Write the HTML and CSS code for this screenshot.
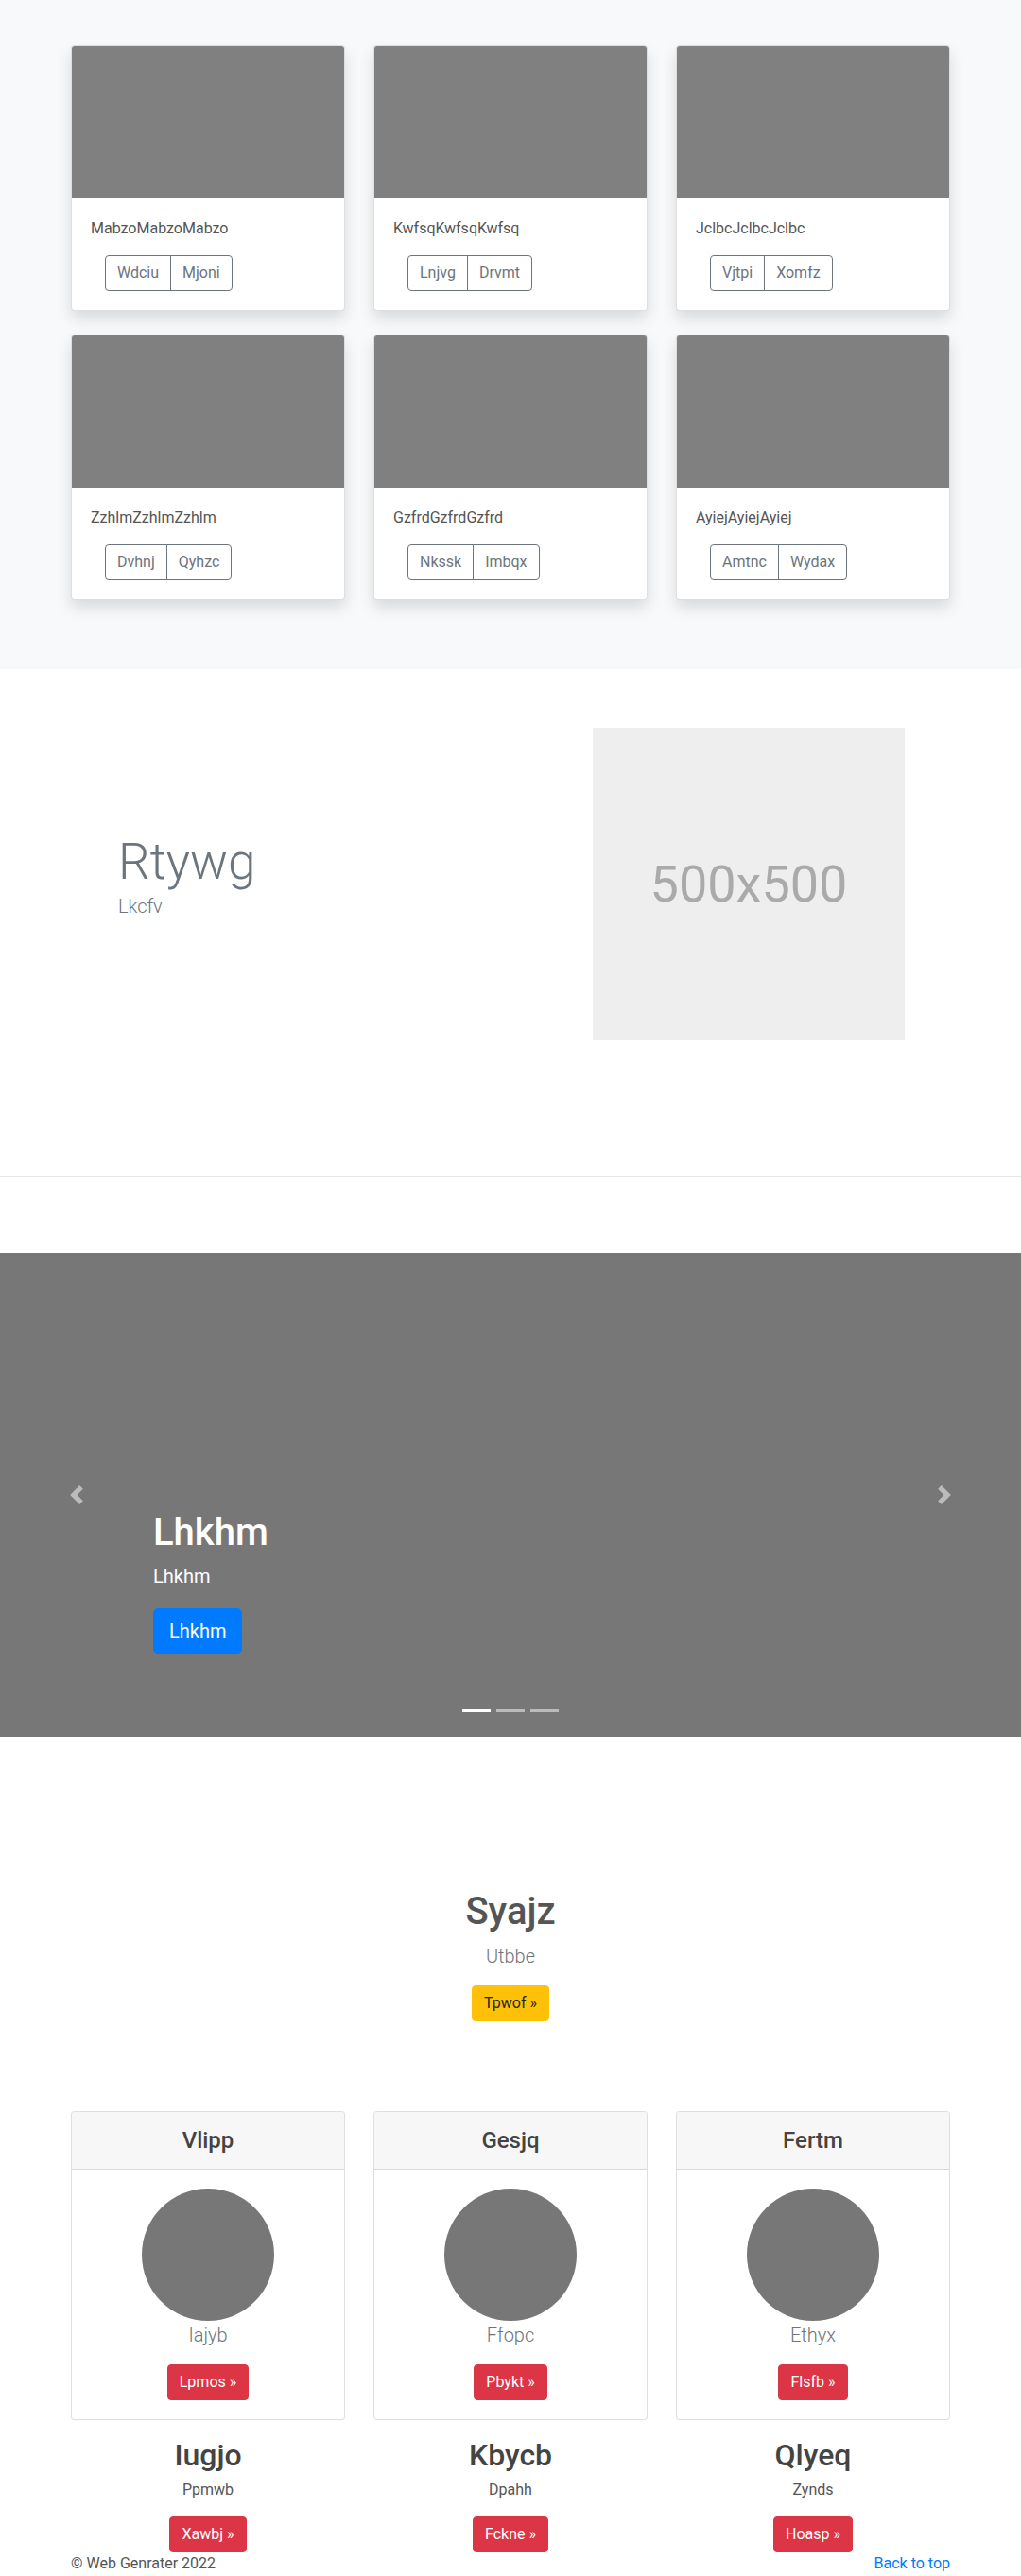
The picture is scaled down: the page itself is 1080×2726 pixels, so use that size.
FILE: index.html
```html
<!DOCTYPE html>
<html lang="en">
<head>
<meta charset="utf-8">
<title>Web Genrater</title>
<link rel="stylesheet" href="styles.css">
</head>
<body>
<section class="album">
  <div class="container grid3 album-grid">
    <div class="card shadow-card">
      <div class="thumb"></div>
      <div class="card-body">
        <p class="card-text">MabzoMabzoMabzo</p>
        <div class="btn-group"><button class="btn btn-outline">Wdciu</button><button class="btn btn-outline">Mjoni</button></div>
      </div>
    </div>
    <div class="card shadow-card">
      <div class="thumb"></div>
      <div class="card-body">
        <p class="card-text">KwfsqKwfsqKwfsq</p>
        <div class="btn-group"><button class="btn btn-outline">Lnjvg</button><button class="btn btn-outline">Drvmt</button></div>
      </div>
    </div>
    <div class="card shadow-card">
      <div class="thumb"></div>
      <div class="card-body">
        <p class="card-text">JclbcJclbcJclbc</p>
        <div class="btn-group"><button class="btn btn-outline">Vjtpi</button><button class="btn btn-outline">Xomfz</button></div>
      </div>
    </div>
    <div class="card shadow-card">
      <div class="thumb"></div>
      <div class="card-body">
        <p class="card-text">ZzhlmZzhlmZzhlm</p>
        <div class="btn-group"><button class="btn btn-outline">Dvhnj</button><button class="btn btn-outline">Qyhzc</button></div>
      </div>
    </div>
    <div class="card shadow-card">
      <div class="thumb"></div>
      <div class="card-body">
        <p class="card-text">GzfrdGzfrdGzfrd</p>
        <div class="btn-group"><button class="btn btn-outline">Nkssk</button><button class="btn btn-outline">Imbqx</button></div>
      </div>
    </div>
    <div class="card shadow-card">
      <div class="thumb"></div>
      <div class="card-body">
        <p class="card-text">AyiejAyiejAyiej</p>
        <div class="btn-group"><button class="btn btn-outline">Amtnc</button><button class="btn btn-outline">Wydax</button></div>
      </div>
    </div>
  </div>
</section>

<section class="container featurette">
  <div class="feat-text">
    <h2 class="feat-heading">Rtywg</h2>
    <p class="lead">Lkcfv</p>
  </div>
  <div class="feat-media">
    <div class="placeholder">500x500</div>
  </div>
</section>
<hr class="divider">

<section class="carousel">
  <a class="ctrl ctrl-prev" href="#">
    <svg class="ctrl-icon" viewBox="0 0 8 8" width="20" height="20"><path fill="#fff" d="M5.25 0l-4 4 4 4 1.5-1.5-2.5-2.5 2.5-2.5-1.5-1.5z"/></svg>
  </a>
  <a class="ctrl ctrl-next" href="#">
    <svg class="ctrl-icon" viewBox="0 0 8 8" width="20" height="20"><path fill="#fff" d="M2.75 0l-1.5 1.5 2.5 2.5-2.5 2.5 1.5 1.5 4-4-4-4z"/></svg>
  </a>
  <div class="caption">
    <h1 class="caption-title">Lhkhm</h1>
    <p class="caption-text">Lhkhm</p>
    <p class="caption-action"><a class="btn btn-lg btn-primary" href="#">Lhkhm</a></p>
  </div>
  <ol class="indicators">
    <li class="active"></li>
    <li></li>
    <li></li>
  </ol>
</section>

<section class="container intro">
  <h2 class="intro-title">Syajz</h2>
  <p class="lead">Utbbe</p>
  <a class="btn btn-warning" href="#">Tpwof &raquo;</a>
</section>

<section class="container grid3 team">
  <div class="team-col">
    <div class="card plain-card">
      <div class="card-header"><h4>Vlipp</h4></div>
      <div class="card-body center">
        <div class="circle"></div>
        <p class="lead small-lead">Iajyb</p>
        <a class="btn btn-danger" href="#">Lpmos &raquo;</a>
      </div>
    </div>
    <h2 class="team-title">Iugjo</h2>
    <p class="team-text">Ppmwb</p>
    <a class="btn btn-danger" href="#">Xawbj &raquo;</a>
  </div>
  <div class="team-col">
    <div class="card plain-card">
      <div class="card-header"><h4>Gesjq</h4></div>
      <div class="card-body center">
        <div class="circle"></div>
        <p class="lead small-lead">Ffopc</p>
        <a class="btn btn-danger" href="#">Pbykt &raquo;</a>
      </div>
    </div>
    <h2 class="team-title">Kbycb</h2>
    <p class="team-text">Dpahh</p>
    <a class="btn btn-danger" href="#">Fckne &raquo;</a>
  </div>
  <div class="team-col">
    <div class="card plain-card">
      <div class="card-header"><h4>Fertm</h4></div>
      <div class="card-body center">
        <div class="circle"></div>
        <p class="lead small-lead">Ethyx</p>
        <a class="btn btn-danger" href="#">Flsfb &raquo;</a>
      </div>
    </div>
    <h2 class="team-title">Qlyeq</h2>
    <p class="team-text">Zynds</p>
    <a class="btn btn-danger" href="#">Hoasp &raquo;</a>
  </div>
</section>

<footer class="container footer">
  <p>&copy; Web Genrater 2022</p>
  <p><a class="top-link" href="#">Back to top</a></p>
</footer>
</body>
</html>
```

FILE: styles.css
```css
* { box-sizing: border-box; }

html, body {
  margin: 0;
  padding: 0;
}

body {
  font-family: "Segoe UI", Roboto, "Noto Sans", "Liberation Sans", sans-serif;
  font-size: 16px;
  line-height: 1.5;
  color: #555;
  background: #fff;
}

h1, h2, h4, p { margin: 0; }

a { text-decoration: none; }

.container {
  width: 930px;
  margin: 0 auto;
}

.grid3 {
  display: grid;
  grid-template-columns: repeat(3, 1fr);
  column-gap: 30px;
}

/* ---------- album ---------- */
.album {
  background: #f8f9fa;
  padding: 48px 0 48px;
}

.album-grid { row-gap: 25px; padding-bottom: 25px; }

.card {
  background: #fff;
  border: 1px solid rgba(0, 0, 0, 0.125);
  border-radius: 4px;
  overflow: hidden;
}

.shadow-card {
  box-shadow: 0 8px 16px rgba(0, 0, 0, 0.13);
}

.thumb {
  height: 161px;
  background: #808080;
}

.card-body {
  padding: 20px;
}

.card-text {
  margin-bottom: 16px;
  color: #555;
}

.btn-group {
  display: inline-flex;
  margin-left: 15px;
}

.btn {
  display: inline-block;
  font-family: inherit;
  font-size: 16px;
  line-height: 24px;
  padding: 6px 12px;
  border: 1px solid transparent;
  border-radius: 4px;
  font-weight: 400;
  text-align: center;
  cursor: pointer;
}

.btn-outline {
  background: transparent;
  color: #6c757d;
  border-color: #6c757d;
}

.btn-group .btn-outline:first-child {
  border-top-right-radius: 0;
  border-bottom-right-radius: 0;
}

.btn-group .btn-outline:last-child {
  margin-left: -1px;
  border-top-left-radius: 0;
  border-bottom-left-radius: 0;
}

/* ---------- featurette ---------- */
.featurette {
  display: grid;
  grid-template-columns: 1fr 378px;
  align-items: center;
  padding: 62px 0 64px;
}

.feat-text { padding-left: 50px; }

.feat-heading {
  font-size: 53px;
  font-weight: 300;
  line-height: 1.2;
  color: #6c757d;
}

.lead {
  font-size: 20px;
  font-weight: 300;
  line-height: 1.5;
  color: #6c757d;
}

.feat-text .lead { margin-bottom: 16px; }

.placeholder {
  width: 330px;
  height: 331px;
  background: #eee;
  color: #aaa;
  font-size: 54px;
  display: flex;
  align-items: center;
  justify-content: center;
}

.divider {
  margin: 80px 0;
  border: 0;
  border-top: 1px solid rgba(0, 0, 0, 0.1);
}

/* ---------- carousel ---------- */
.carousel {
  position: relative;
  height: 512px;
  background: #777;
}

.ctrl {
  position: absolute;
  top: 0;
  bottom: 0;
  width: 15%;
  display: flex;
  align-items: center;
  justify-content: center;
  opacity: 0.5;
}

.ctrl-prev { left: 0; }
.ctrl-next { right: 0; }

.ctrl-icon { display: block; }

.caption {
  position: absolute;
  left: 15%;
  right: 15%;
  bottom: 48px;
  padding: 20px 0;
  color: #fff;
  text-align: left;
}

.caption-title {
  font-size: 40px;
  font-weight: 500;
  line-height: 1.2;
  margin-bottom: 8px;
}

.caption-text {
  font-size: 20px;
  line-height: 1.4;
  margin-bottom: 20px;
}

.caption-action { margin: 0 0 20px; }

.btn-lg {
  font-size: 20px;
  line-height: 30px;
  padding: 8px 16px;
  border-radius: 5px;
}

.btn-primary {
  background: #007bff;
  border-color: #007bff;
  color: #fff;
}

.indicators {
  position: absolute;
  left: 0;
  right: 0;
  bottom: 16px;
  margin: 0;
  padding: 0;
  list-style: none;
  display: flex;
  justify-content: center;
}

.indicators li {
  width: 30px;
  height: 23px;
  margin: 0 3px;
  border-top: 10px solid transparent;
  border-bottom: 10px solid transparent;
  background-clip: padding-box;
  background-color: #fff;
  opacity: 0.5;
}

.indicators li.active { opacity: 1; }

/* ---------- intro ---------- */
.intro {
  text-align: center;
  padding-top: 161px;
}

.intro-title {
  font-size: 40px;
  font-weight: 500;
  line-height: 1.2;
  color: #555;
  margin-bottom: 8px;
}

.intro .lead { margin-bottom: 16px; }

.btn-warning {
  background: #ffc107;
  border-color: #ffc107;
  color: #212529;
}

/* ---------- team ---------- */
.team {
  margin-top: 95px;
}

.team-col {
  display: flex;
  flex-direction: column;
  align-items: center;
  text-align: center;
}

.plain-card {
  width: 100%;
}

.card-header {
  background: #f7f7f7;
  border-bottom: 1px solid rgba(0, 0, 0, 0.125);
  padding: 12px 20px;
}

.card-header h4 {
  font-size: 24px;
  font-weight: 500;
  line-height: 36px;
  color: #444;
}

.center { text-align: center; }

.circle {
  width: 140px;
  height: 140px;
  border-radius: 50%;
  background: #777;
  margin: 0 auto;
}

.small-lead {
  margin-bottom: 16px;
}

.btn-danger {
  background: #dc3545;
  border-color: #dc3545;
  color: #fff;
}

.team-title {
  margin-top: 18px;
  margin-bottom: 6px;
  font-size: 32px;
  font-weight: 500;
  line-height: 38px;
  color: #444;
}

.team-text {
  margin-bottom: 16px;
  color: #555;
}

/* ---------- footer ---------- */
.footer {
  display: flex;
  justify-content: space-between;
  line-height: 24px;
}

.footer p { color: #555; }

.top-link { color: #007bff; }
```
